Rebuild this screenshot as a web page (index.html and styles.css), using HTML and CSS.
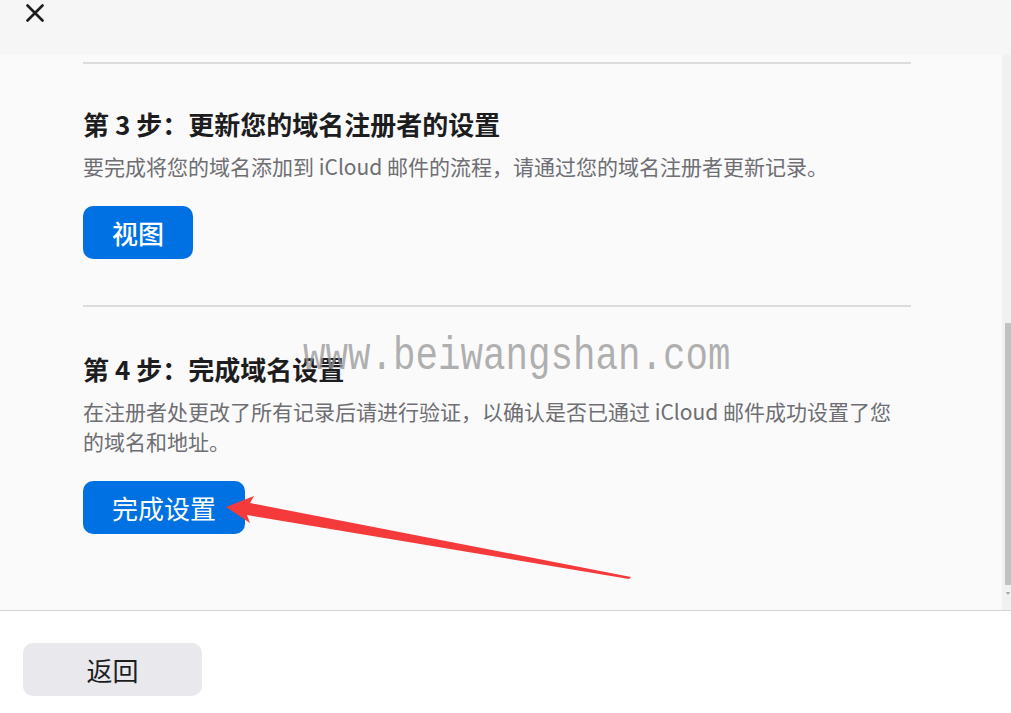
FILE: index.html
```html
<!DOCTYPE html>
<html lang="zh-CN">
<head>
<meta charset="utf-8">
<title>完成域名设置</title>
<link rel="stylesheet" href="styles.css">
</head>
<body>
<div class="page">
  <header class="topbar">
    <button class="close" aria-label="关闭">
      <svg width="18" height="18" viewBox="0 0 18 18"><path d="M1.5 1.5 L16.5 16.5 M16.5 1.5 L1.5 16.5" stroke="#1d1d1f" stroke-width="2.6" stroke-linecap="round" fill="none"/></svg>
    </button>
  </header>
  <div class="content">
    <main class="steps">
      <hr class="rule">
      <section class="step first">
        <h2 class="step-title">第 3 步：更新您的域名注册者的设置</h2>
        <p class="step-desc">要完成将您的域名添加到 iCloud 邮件的流程，请通过您的域名注册者更新记录。</p>
        <button class="primary bold">视图</button>
      </section>
      <hr class="rule">
      <section class="step">
        <h2 class="step-title">第 4 步：完成域名设置</h2>
        <p class="step-desc">在注册者处更改了所有记录后请进行验证，以确认是否已通过 iCloud 邮件成功设置了您的域名和地址。</p>
        <button class="primary">完成设置</button>
      </section>
    </main>
    <div class="scrollbar">
      <div class="thumb"></div>
      <div class="down"></div>
    </div>
  </div>
  <footer class="bottombar">
    <button class="secondary">返回</button>
  </footer>
  <div class="watermark">www.beiwangshan.com</div>
  <svg class="annotation" width="1011" height="713" viewBox="0 0 1011 713">
    <polygon points="226,507 254,496 250,503 631,577 629,579 247,515 250,523" fill="#f43a3a"/>
  </svg>
</div>
</body>
</html>
```

FILE: styles.css
```css
* { box-sizing: border-box; }
html, body { margin: 0; padding: 0; }
body {
  font-family: "Noto Sans CJK SC", "Noto Sans", sans-serif;
  background: #ffffff;
  color: #1d1d1f;
}
.page {
  position: relative;
  width: 1011px;
  height: 713px;
  overflow: hidden;
  display: flex;
  flex-direction: column;
}
.topbar {
  height: 55px;
  flex: none;
  background: #f6f6f6;
  padding: 4px 0 0 26px;
}
.close {
  border: 0;
  background: transparent;
  padding: 0;
  width: 18px;
  height: 18px;
  display: block;
}
.close svg { display: block; }
.content {
  height: 555px;
  flex: none;
  display: flex;
  background: #fafafa;
  overflow: hidden;
}
.steps {
  flex: 1;
  padding: 7px 91px 0 83px;
}
.rule {
  margin: 0;
  border: 0;
  height: 2px;
  background: #dcdcdc;
}
.step {
  padding: 45px 0 46px;
}
.step.first {
  padding-top: 43px;
}
.step-title {
  margin: 0;
  font-size: 26px;
  line-height: 34px;
  font-weight: 700;
  color: #1d1d1f;
}
.step-desc {
  margin: 10px 0 0;
  max-width: 818px;
  font-size: 21px;
  line-height: 30px;
  color: #6e6e73;
}
.primary {
  display: block;
  margin-top: 25px;
  height: 53px;
  padding: 0 29px;
  border: 0;
  border-radius: 10px;
  background: #0071e3;
  color: #ffffff;
  font-family: inherit;
  font-size: 26px;
  line-height: 53px;
  font-weight: 400;
}
.primary.bold { font-weight: 500; }
.scrollbar {
  width: 9px;
  flex: none;
  background: #f1f1f1;
  padding: 268px 0 0 3px;
  display: flex;
  flex-direction: column;
  align-items: center;
}
.thumb {
  width: 6px;
  height: 262px;
  background: #c1c1c1;
}
.down {
  margin-top: 7px;
  width: 0;
  height: 0;
  border-left: 2px solid transparent;
  border-right: 2px solid transparent;
  border-top: 3px solid #a0a0a0;
}
.bottombar {
  flex: 1;
  background: #ffffff;
  border-top: 1px solid #d4d4d4;
  padding: 32px 0 0 23px;
}
.secondary {
  display: block;
  width: 179px;
  height: 53px;
  border: 0;
  border-radius: 10px;
  background: #e8e8ed;
  color: #1d1d1f;
  font-family: inherit;
  font-size: 26px;
  line-height: 53px;
  padding: 0;
}
.watermark {
  position: absolute;
  left: 303px;
  top: 341px;
  font-family: "Liberation Mono", "DejaVu Sans Mono", monospace;
  font-size: 37.5px;
  line-height: 40px;
  color: rgba(150, 150, 150, 0.75);
  transform: scaleY(1.22);
  transform-origin: left bottom;
  white-space: nowrap;
}
.annotation {
  position: absolute;
  left: 0;
  top: 0;
  pointer-events: none;
}
```
